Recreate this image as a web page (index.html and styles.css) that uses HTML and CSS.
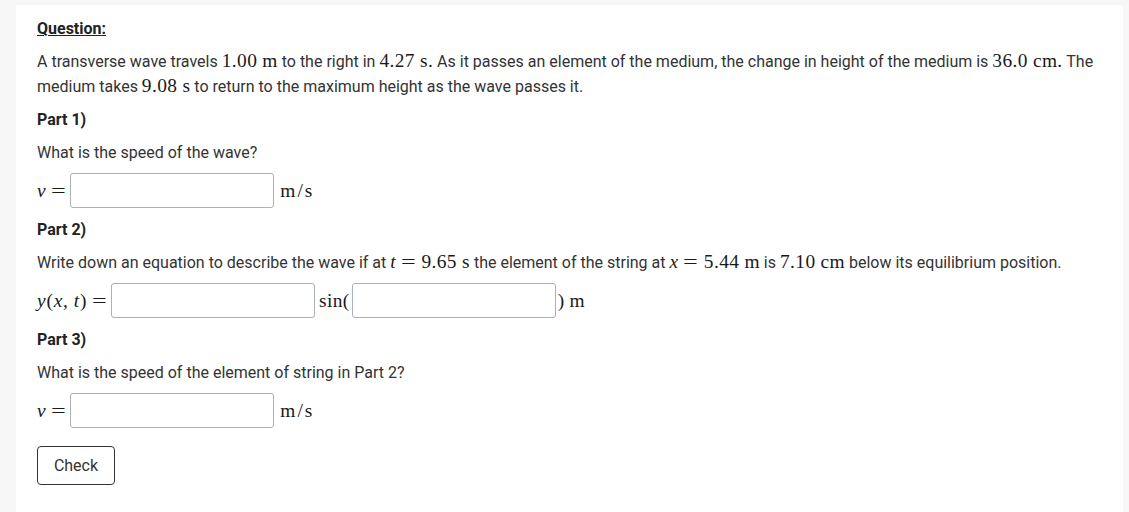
FILE: index.html
```html
<!DOCTYPE html>
<html lang="en">
<head>
<meta charset="utf-8">
<title>Question</title>
<link rel="stylesheet" href="styles.css">
</head>
<body>
<main class="card">
  <p class="title">Question:</p>
  <p class="text">A transverse wave travels <span class="m">1.00<span class="sp"></span>m</span> to the right in <span class="m">4.27<span class="sp"></span>s.</span> As it passes an element of the medium, the change in height of the medium is <span class="m">36.0<span class="sp"></span>cm.</span> The medium takes <span class="m">9.08<span class="sp"></span>s</span> to return to the maximum height as the wave passes it.</p>

  <p class="part">Part 1)</p>
  <p class="text">What is the speed of the wave?</p>
  <div class="row">
    <span class="m lhs"><i>v</i><span class="eq">=</span></span>
    <input class="box" type="text">
    <span class="m unit">m/s</span>
  </div>

  <p class="part">Part 2)</p>
  <p class="text">Write down an equation to describe the wave if at <span class="m"><i>t</i><span class="eq">=</span>9.65<span class="sp"></span>s</span> the element of the string at <span class="m"><i>x</i><span class="eq">=</span>5.44<span class="sp"></span>m</span> is <span class="m">7.10<span class="sp"></span>cm</span> below its equilibrium position.</p>
  <div class="row">
    <span class="m lhs wide"><i>y</i>(<i>x</i>,<span class="sp"></span><i>t</i>)<span class="eq">=</span></span>
    <input class="box" type="text">
    <span class="m sin">sin(</span>
    <input class="box" type="text">
    <span class="m close">)<span class="sp2"></span>m</span>
  </div>

  <p class="part">Part 3)</p>
  <p class="text">What is the speed of the element of string in Part 2?</p>
  <div class="row">
    <span class="m lhs"><i>v</i><span class="eq">=</span></span>
    <input class="box" type="text">
    <span class="m unit">m/s</span>
  </div>

  <button class="check" type="button">Check</button>
</main>
</body>
</html>
```
FILE: styles.css
```css
html, body {
  margin: 0;
  padding: 0;
}
body {
  background: #f7f7f7;
  padding: 5px 6px 0 16px;
  font-family: Roboto, "Liberation Sans", sans-serif;
  font-size: 16px;
  line-height: 25px;
  color: #333;
  min-height: 512px;
  box-sizing: border-box;
}
.card {
  background: #fff;
  padding: 11px 21px 26px 21px;
  min-height: 507px;
  box-sizing: border-box;
}
p {
  margin: 0 0 8px 0;
}
.title {
  font-weight: 700;
  text-decoration: underline;
  color: #222;
}
.part {
  font-weight: 700;
  color: #222;
}
.m {
  font-family: "Liberation Serif", "DejaVu Serif", serif;
  font-size: 19.4px;
  line-height: 1;
  letter-spacing: 0.4px;
  color: #1a1a1a;
}
.m i {
  font-style: italic;
}
.sp {
  display: inline-block;
  width: 5px;
}
.sp2 {
  display: inline-block;
  width: 5px;
}
.eq {
  display: inline-block;
  margin: 0 7px;
  transform: scaleX(1.35);
}
.row {
  display: flex;
  align-items: center;
  height: 35px;
  margin-bottom: 9px;
}
.lhs {
  display: inline-flex;
  align-items: center;
}
.lhs .eq {
  margin-right: 6px;
}
.lhs.wide {
  letter-spacing: 0.8px;
}
.lhs.wide .eq {
  margin-left: 7px;
  margin-right: 5px;
}
.box {
  width: 204px;
  height: 35px;
  box-sizing: border-box;
  border: 1px solid #a9b0b6;
  border-radius: 3px;
  padding: 0 6px;
  margin: 0;
  background: #fff;
  font: inherit;
}
.unit {
  margin-left: 6px;
  letter-spacing: 2px;
}
.sin {
  margin: 0 2px 0 4px;
}
.close {
  margin-left: 2px;
}
.check {
  margin-top: 9px;
  width: 78px;
  height: 39px;
  border: 1px solid #333;
  border-radius: 4px;
  background: #fff;
  color: #333;
  font-family: Roboto, "Liberation Sans", sans-serif;
  font-size: 16px;
  letter-spacing: 0;
  padding: 0;
}
```
